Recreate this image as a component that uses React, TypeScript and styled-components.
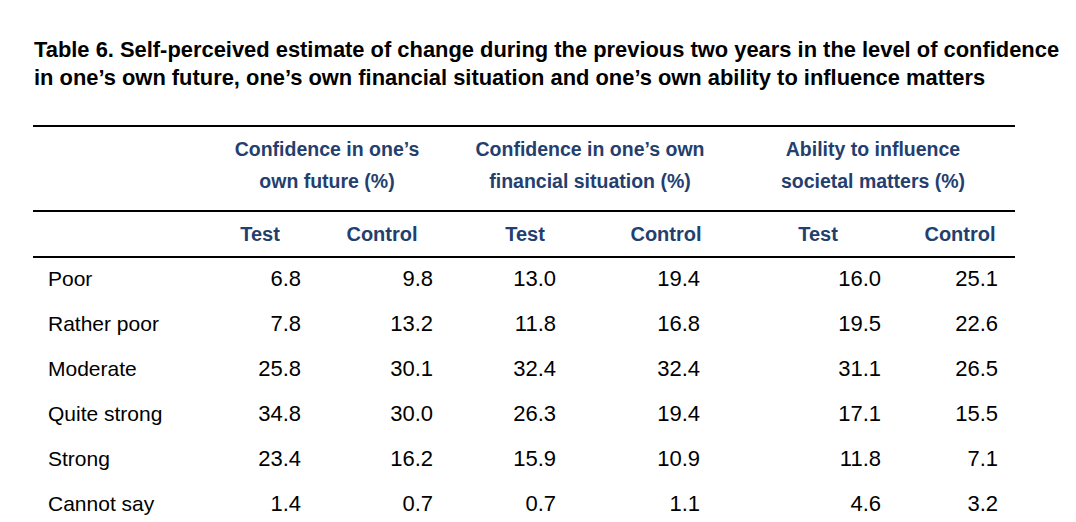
import React from "react";
import styled, { createGlobalStyle } from "styled-components";

const GlobalStyle = createGlobalStyle`
  body {
    margin: 0;
    background: #ffffff;
    font-family: "Liberation Sans", Arial, sans-serif;
    color: #000000;
  }
`;

const COLUMNS = "172px 110px 134px 152px 130px 174px 110px";

const Page = styled.div`
  padding: 36px 0 0 34px;
`;

const Title = styled.h1`
  margin: 0;
  font-size: 21.9px;
  line-height: 28px;
  font-weight: bold;
  white-space: nowrap;
`;

const Table = styled.div`
  margin: 33px 0 0 -1px;
  width: 982px;
`;

const Row = styled.div<{ $height: number }>`
  display: grid;
  grid-template-columns: ${COLUMNS};
  align-items: center;
  height: ${(p) => p.$height}px;
`;

const GroupRow = styled(Row)`
  border-top: 2px solid #000;
  border-bottom: 2px solid #000;
`;

const SubHeadRow = styled(Row)`
  border-bottom: 2px solid #000;
`;

const DataRow = styled(Row)`
  padding-bottom: 3px;
`;

const GroupTitle = styled.div`
  grid-column: span 2;
  text-align: center;
  color: #243f6e;
  font-size: 19.5px;
  font-weight: bold;
  line-height: 32px;
  padding-bottom: 8px;
`;

const ColHead = styled.div`
  text-align: center;
  color: #243f6e;
  font-size: 20px;
  font-weight: bold;
`;

const Label = styled.div`
  padding-left: 15px;
  font-size: 21px;
`;

const Num = styled.div<{ $pad: number }>`
  text-align: right;
  padding-right: ${(p) => p.$pad}px;
  font-size: 22px;
`;

const PADS = [14, 16, 45, 31, 24, 17];

const groups = [
  ["Confidence in one\u2019s", "own future (%)"],
  ["Confidence in one\u2019s own", "financial situation (%)"],
  ["Ability to influence", "societal matters (%)"],
];

const rows: [string, string[]][] = [
  ["Poor", ["6.8", "9.8", "13.0", "19.4", "16.0", "25.1"]],
  ["Rather poor", ["7.8", "13.2", "11.8", "16.8", "19.5", "22.6"]],
  ["Moderate", ["25.8", "30.1", "32.4", "32.4", "31.1", "26.5"]],
  ["Quite strong", ["34.8", "30.0", "26.3", "19.4", "17.1", "15.5"]],
  ["Strong", ["23.4", "16.2", "15.9", "10.9", "11.8", "7.1"]],
  ["Cannot say", ["1.4", "0.7", "0.7", "1.1", "4.6", "3.2"]],
];

export default function App() {
  return (
    <Page>
      <GlobalStyle />
      <Title>
        Table 6. Self-perceived estimate of change during the previous two years in the level of confidence
        <br />
        in one’s own future, one’s own financial situation and one’s own ability to influence matters
      </Title>
      <Table>
        <GroupRow $height={83}>
          <div />
          {groups.map((g) => (
            <GroupTitle key={g[0]}>
              {g[0]}
              <br />
              {g[1]}
            </GroupTitle>
          ))}
        </GroupRow>
        <SubHeadRow $height={44}>
          <div />
          {groups.map((g) => (
            <React.Fragment key={g[0]}>
              <ColHead>Test</ColHead>
              <ColHead>Control</ColHead>
            </React.Fragment>
          ))}
        </SubHeadRow>
        {rows.map(([label, values]) => (
          <DataRow key={label} $height={42}>
            <Label>{label}</Label>
            {values.map((v, i) => (
              <Num key={i} $pad={PADS[i]}>
                {v}
              </Num>
            ))}
          </DataRow>
        ))}
      </Table>
    </Page>
  );
}
